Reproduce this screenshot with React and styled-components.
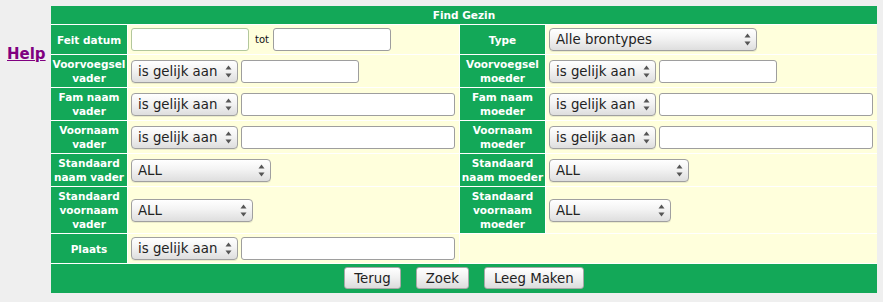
import React from "react";
import styled, { createGlobalStyle } from "styled-components";

const GlobalStyle = createGlobalStyle`
  html, body {
    margin: 0;
    background: #efefef;
  }
  body {
    font-family: "DejaVu Sans", Verdana, sans-serif;
  }
`;

const Page = styled.div`
  display: flex;
  align-items: flex-start;
  padding-top: 6px;
  width: 883px;
  height: 302px;
  box-sizing: border-box;
  background: #efefef;
`;

const HelpCol = styled.div`
  width: 51px;
  box-sizing: border-box;
  padding: 38px 0 0 7px;
`;

const HelpLink = styled.a`
  font: bold 15px/18px "DejaVu Sans", Verdana, sans-serif;
  color: #800080;
  text-decoration: underline;
`;

const Form = styled.div`
  display: grid;
  grid-template-columns: 76px 331px 85px 331px;
  gap: 1px;
  background: #ffffff;
`;

const Header = styled.div`
  grid-column: 1 / -1;
  background: #13a858;
  color: #fff;
  font: bold 10.5px/14px "DejaVu Sans", Verdana, sans-serif;
  text-align: center;
  padding: 2px 0;
`;

const Label = styled.div`
  background: #13a858;
  color: #fff;
  font: bold 10.5px/14px "DejaVu Sans", Verdana, sans-serif;
  text-align: center;
  padding: 2px 1px;
  display: flex;
  align-items: center;
  justify-content: center;
`;

const Value = styled.div`
  background: #ffffdc;
  display: flex;
  align-items: center;
  gap: 3px;
  padding: 3px;
  grid-column: ${(p) => (p.$span ? `span ${p.$span}` : "auto")};
`;

const SelectBox = styled.div`
  display: flex;
  align-items: center;
  justify-content: space-between;
  width: ${(p) => p.$w}px;
  height: 23px;
  box-sizing: border-box;
  border: 1px solid #a0a0a0;
  border-radius: 4px;
  background: linear-gradient(#ffffff, #f3f3f3 45%, #dedede);
  padding: 0 5px 0 6px;
  font: 13.33px "DejaVu Sans", Verdana, sans-serif;
  color: #222;
  box-shadow: 0 1px 0 rgba(0, 0, 0, 0.08);
`;

const Input = styled.div`
  width: ${(p) => p.$w}px;
  height: 23px;
  box-sizing: border-box;
  background: #fff;
  border: 1px solid ${(p) => (p.$focus ? "#b3c79c" : "#9e9e9e")};
  border-radius: 3px;
`;

const Tot = styled.span`
  font: 10px "DejaVu Sans", Verdana, sans-serif;
  color: #111;
  margin: 0 1px 0 3px;
`;

const Footer = styled.div`
  grid-column: 1 / -1;
  background: #13a858;
  display: flex;
  justify-content: center;
  gap: 15px;
  padding: 3px 0 4px;
`;

const Button = styled.button`
  height: 22px;
  box-sizing: border-box;
  padding: 0 9px;
  border: 1px solid #a8a8a8;
  border-radius: 3px;
  background: linear-gradient(#ffffff, #f0f0f0 50%, #dcdcdc);
  font: 13.33px "DejaVu Sans", Verdana, sans-serif;
  color: #222;
`;

const Arrows = () => (
  <svg width="7" height="13" viewBox="0 0 7 13">
    <path d="M3.5 0.5 L6.5 4.5 L0.5 4.5 Z" fill="#555" />
    <path d="M0.5 8.5 L6.5 8.5 L3.5 12.5 Z" fill="#555" />
  </svg>
);

const Select = ({ w, children }) => (
  <SelectBox $w={w}>
    <span>{children}</span>
    <Arrows />
  </SelectBox>
);

const Op = () => <Select w={107}>is gelijk aan</Select>;

export default function App() {
  return (
    <Page>
      <GlobalStyle />
      <HelpCol>
        <HelpLink href="#">Help</HelpLink>
      </HelpCol>
      <Form>
        <Header>Find Gezin</Header>

        <Label>Feit datum</Label>
        <Value>
          <Input $w={118} $focus />
          <Tot>tot</Tot>
          <Input $w={118} />
        </Value>
        <Label>Type</Label>
        <Value>
          <Select w={208}>Alle brontypes</Select>
        </Value>

        <Label>Voorvoegsel vader</Label>
        <Value>
          <Op />
          <Input $w={118} />
        </Value>
        <Label>Voorvoegsel moeder</Label>
        <Value>
          <Op />
          <Input $w={118} />
        </Value>

        <Label>Fam naam vader</Label>
        <Value>
          <Op />
          <Input $w={214} />
        </Value>
        <Label>Fam naam moeder</Label>
        <Value>
          <Op />
          <Input $w={214} />
        </Value>

        <Label>Voornaam vader</Label>
        <Value>
          <Op />
          <Input $w={214} />
        </Value>
        <Label>Voornaam moeder</Label>
        <Value>
          <Op />
          <Input $w={214} />
        </Value>

        <Label>Standaard naam vader</Label>
        <Value>
          <Select w={140}>ALL</Select>
        </Value>
        <Label>Standaard naam moeder</Label>
        <Value>
          <Select w={140}>ALL</Select>
        </Value>

        <Label>Standaard voornaam vader</Label>
        <Value>
          <Select w={122}>ALL</Select>
        </Value>
        <Label>Standaard voornaam moeder</Label>
        <Value>
          <Select w={122}>ALL</Select>
        </Value>

        <Label>Plaats</Label>
        <Value>
          <Op />
          <Input $w={214} />
        </Value>
        <Value $span={2} />

        <Footer>
          <Button>Terug</Button>
          <Button>Zoek</Button>
          <Button>Leeg Maken</Button>
        </Footer>
      </Form>
    </Page>
  );
}
